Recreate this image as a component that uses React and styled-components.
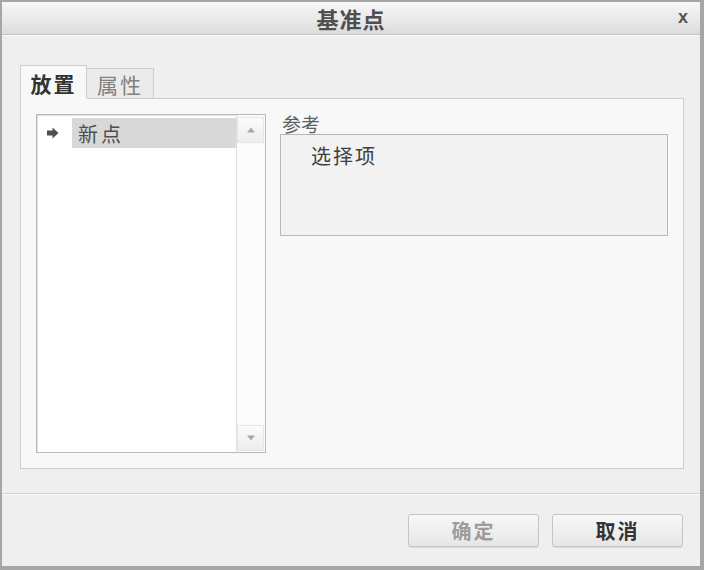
import React from 'react';
import styled, { createGlobalStyle } from 'styled-components';

const GlobalStyle = createGlobalStyle`
  html, body {
    margin: 0;
    padding: 0;
    background: #ffffff;
  }
  body {
    font-family: "Noto Sans CJK SC", "Noto Sans", sans-serif;
  }
`

const Window = styled.div`
  width: 704px;
  height: 570px;
  box-sizing: border-box;
  border: 2px solid #a6a6a6;
  border-right-width: 4px;
  border-bottom-width: 4px;
  background: #efefef;
  display: flex;
  flex-direction: column;
`

const TitleBar = styled.div`
  height: 32px;
  flex: none;
  position: relative;
  display: flex;
  align-items: center;
  justify-content: center;
  background: linear-gradient(#f7f7f7, #e9e9e9 55%, #dcdcdc);
  border-bottom: 1px solid #c2c2c2;
  font-size: 22px;
  font-weight: 700;
  color: #4f4f4f;
  letter-spacing: 1px;
`

const CloseButton = styled.span`
  position: absolute;
  right: 11px;
  top: 5px;
  font-family: "Liberation Sans", sans-serif;
  font-size: 18px;
  font-weight: 700;
  color: #555555;
`

const Body = styled.div`
  flex: 1;
  display: flex;
  flex-direction: column;
  padding: 30px 18px 0 18px;
  border-top: 1px solid #fafafa;
`

const TabRow = styled.div`
  display: flex;
  align-items: flex-end;
  height: 33px;
  margin-bottom: -1px;
  position: relative;
  z-index: 1;
`

const Tab = styled.div`
  box-sizing: border-box;
  height: ${({ $active }) => ($active ? '34px' : '31px')};
  width: ${({ $w }) => $w}px;
  display: flex;
  align-items: center;
  justify-content: center;
  border: 1px solid #cdcdcd;
  border-bottom: ${({ $active }) => ($active ? '1px solid #f8f8f8' : '1px solid #cdcdcd')};
  border-left: ${({ $active }) => ($active ? '1px solid #cdcdcd' : 'none')};
  background: ${({ $active }) => ($active ? '#f8f8f8' : '#ebebeb')};
  font-size: 21px;
  font-weight: ${({ $active }) => ($active ? 700 : 400)};
  color: ${({ $active }) => ($active ? '#333333' : '#808080')};
  letter-spacing: 2px;
  padding-top: 1px;
`

const Panel = styled.div`
  box-sizing: border-box;
  height: 371px;
  width: 664px;
  border: 1px solid #cdcdcd;
  background: #f8f8f8;
  padding: 15px 15px 15px 15px;
  display: flex;
  gap: 14px;
`

const ListBox = styled.div`
  width: 230px;
  flex: none;
  box-sizing: border-box;
  border: 1px solid #b9b9b9;
  box-shadow: inset 1px 1px 0 #e2e2e2;
  background: #ffffff;
  display: flex;
`

const ListItems = styled.div`
  flex: 1;
  padding-top: 3px;
`

const ListRow = styled.div`
  display: flex;
  height: 30px;
`

const ArrowCell = styled.div`
  width: 35px;
  display: flex;
  align-items: center;
  justify-content: center;
  padding-right: 4px;
  box-sizing: border-box;
`

const RowLabel = styled.div`
  flex: 1;
  display: flex;
  align-items: center;
  padding-left: 6px;
  background: ${({ $selected }) => ($selected ? '#d8d8d8' : 'transparent')};
  font-size: 20px;
  color: #4e4e4e;
  letter-spacing: 3px;
`

const ScrollBar = styled.div`
  width: 27px;
  flex: none;
  border-left: 1px solid #dedede;
  background: #fbfbfb;
  display: flex;
  flex-direction: column;
  justify-content: space-between;
  padding: 2px 1px 1px 0;
`

const ScrollButton = styled.div`
  height: 24px;
  display: flex;
  align-items: center;
  justify-content: center;
  background: linear-gradient(#fbfbfb, #ededed);
  border: 1px solid #e6e6e6;
`

const RefColumn = styled.div`
  flex: 1;
  display: flex;
  flex-direction: column;
`

const RefLabel = styled.div`
  font-size: 19px;
  line-height: 21px;
  height: 21px;
  color: #606060;
  padding-left: 2px;
  margin-top: -1px;
`

const RefBox = styled.div`
  box-sizing: border-box;
  height: 102px;
  border: 1px solid #b8b8b8;
  background: #f2f2f2;
  padding: 6px 0 0 30px;
  font-size: 20px;
  color: #404040;
  letter-spacing: 2px;
`

const Footer = styled.div`
  margin-top: 24px;
  margin-left: -18px;
  margin-right: -18px;
  border-top: 1px solid #d2d2d2;
  box-shadow: inset 0 1px 0 #fafafa;
  flex: 1;
  display: flex;
  justify-content: flex-end;
  align-items: flex-start;
  gap: 13px;
  padding: 20px 17px 0 0;
`

const Button = styled.button`
  width: 131px;
  height: 33px;
  box-sizing: border-box;
  border: 1px solid #c4c4c4;
  border-radius: 3px;
  background: linear-gradient(#f8f8f8, #e6e6e6);
  box-shadow: 0 1px 0 #d9d9d9;
  font-family: "Noto Sans CJK SC", sans-serif;
  font-size: 20px;
  font-weight: 700;
  letter-spacing: 2px;
  color: ${({ disabled }) => (disabled ? '#9c9c9c' : '#333333')};
  padding: 0;
`

function Arrow () {
  return (
    <svg width="12" height="12" viewBox="0 0 12 12">
      <path d="M0 3.5 H5.5 V0.5 L11.5 6 L5.5 11.5 V8.5 H0 Z" fill="#505050" />
    </svg>
  )
}

function Tri ({ down }) {
  return (
    <svg width="10" height="6" viewBox="0 0 10 6">
      <path d={down ? 'M1 0.5 H9 L5 5.5 Z' : 'M1 5.5 H9 L5 0.5 Z'} fill="#a8a8a8" />
    </svg>
  )
}

export default function App () {
  return (
    <>
      <GlobalStyle />
      <Window>
        <TitleBar>
          基准点
          <CloseButton>x</CloseButton>
        </TitleBar>
        <Body>
          <TabRow>
            <Tab $active $w={67}>放置</Tab>
            <Tab $w={67}>属性</Tab>
          </TabRow>
          <Panel>
            <ListBox>
              <ListItems>
                <ListRow>
                  <ArrowCell><Arrow /></ArrowCell>
                  <RowLabel $selected>新点</RowLabel>
                </ListRow>
              </ListItems>
              <ScrollBar>
                <ScrollButton><Tri /></ScrollButton>
                <ScrollButton><Tri down /></ScrollButton>
              </ScrollBar>
            </ListBox>
            <RefColumn>
              <RefLabel>参考</RefLabel>
              <RefBox>选择项</RefBox>
            </RefColumn>
          </Panel>
          <Footer>
            <Button disabled>确定</Button>
            <Button>取消</Button>
          </Footer>
        </Body>
      </Window>
    </>
  )
}
